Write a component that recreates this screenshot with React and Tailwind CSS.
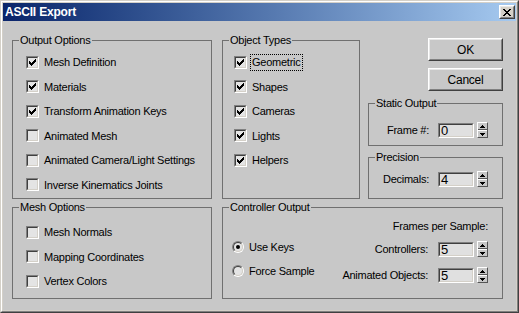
const CHECK_ROWS = [
  [[6, 1]],
  [[5, 2]],
  [[0, 1], [4, 3]],
  [[0, 2], [3, 3]],
  [[0, 5]],
  [[1, 3]],
  [[2, 1]],
]

const X_ROWS = [
  [[0, 2], [6, 2]],
  [[1, 2], [5, 2]],
  [[2, 4]],
  [[3, 2]],
  [[2, 4]],
  [[1, 2], [5, 2]],
  [[0, 2], [6, 2]],
]

function PixelGlyph({ rows, w, h }) {
  return (
    <svg width={w} height={h} viewBox={`0 0 ${w} ${h}`} shapeRendering="crispEdges">
      {rows.map((row, y) =>
        row.map(([x, len], i) => <rect key={`${y}-${i}`} x={x} y={y} width={len} height={1} fill="#000" />)
      )}
    </svg>
  )
}

function Check({ checked }) {
  return (
    <span className="block w-[13px] h-[13px] shrink-0 border border-t-[#808080] border-l-[#808080] border-r-white border-b-white">
      <span className="flex w-full h-full items-center justify-center border border-t-[#404040] border-l-[#404040] border-r-[#d4d0c8] border-b-[#d4d0c8] bg-[#e4e4e4]">
        {checked && <PixelGlyph rows={CHECK_ROWS} w={7} h={7} />}
      </span>
    </span>
  )
}

function Radio({ selected }) {
  return (
    <span className="block w-[12px] h-[12px] shrink-0 rounded-full border border-t-[#808080] border-l-[#808080] border-r-white border-b-white">
      <span className="flex w-full h-full items-center justify-center rounded-full border border-t-[#404040] border-l-[#404040] border-r-[#d4d0c8] border-b-[#d4d0c8] bg-[#e4e4e4]">
        {selected && <span className="block w-[4px] h-[4px] rounded-full bg-black" />}
      </span>
    </span>
  )
}

function Field({ value }) {
  return (
    <span className="block w-[36px] h-[15px] border border-t-[#808080] border-l-[#808080] border-r-white border-b-white">
      <span className="flex w-full h-full items-center pl-[1px] border border-t-[#404040] border-l-[#404040] border-r-[#d4d0c8] border-b-[#d4d0c8] bg-[#e0e0e0] text-[13px] leading-none">
        {value}
      </span>
    </span>
  )
}

function Arrow({ down }) {
  const rows = down ? [[[0, 5]], [[1, 3]], [[2, 1]]] : [[[2, 1]], [[1, 3]], [[0, 5]]]
  return <PixelGlyph rows={rows} w={5} h={3} />
}

function Spinner() {
  return (
    <span className="flex flex-col w-[11px] h-[16px] border border-t-white border-l-white border-r-[#555] border-b-[#555] bg-[#c8c8c8]">
      <span className="flex flex-1 items-center justify-center border-b border-b-[#555]">
        <Arrow />
      </span>
      <span className="flex flex-1 items-center justify-center border-t border-t-white">
        <Arrow down />
      </span>
    </span>
  )
}

function Button({ children }) {
  return (
    <div className="w-[75px] h-[23px] border border-t-white border-l-white border-r-[#404040] border-b-[#404040]">
      <div className="flex w-full h-full items-center justify-center border border-t-[#e8e8e8] border-l-[#e8e8e8] border-r-[#808080] border-b-[#808080] text-[12px]">
        {children}
      </div>
    </div>
  )
}

function Group({ title, className = '', children }) {
  return (
    <fieldset className={`border border-[#707070] ${className}`}>
      <legend className="ml-[6px] px-[1px] leading-[13px]">{title}</legend>
      {children}
    </fieldset>
  )
}

function CheckRow({ label, checked, focused }) {
  return (
    <div className="flex items-center h-[24.5px]">
      <Check checked={checked} />
      {focused ? (
        <span className="ml-[3px] px-[1px] leading-[15px] border border-dotted border-black">{label}</span>
      ) : (
        <span className="ml-[5px]">{label}</span>
      )}
    </div>
  )
}

function SpinRow({ label, value, gap }) {
  return (
    <div className="flex items-center h-[16px]">
      <span>{label}</span>
      <span className={gap}>
        <Field value={value} />
      </span>
      <span className="ml-[3px]">
        <Spinner />
      </span>
    </div>
  )
}

export default function App() {
  return (
    <div className="w-[519px] h-[313px] border border-t-[#d4d0c8] border-l-[#d4d0c8] border-r-[#404040] border-b-[#404040] font-['Liberation_Sans',Arial,sans-serif] text-[11px] tracking-[-0.25px] text-black">
      <div className="flex flex-col h-full p-[1px] bg-[#d4d0c8] border border-t-white border-l-white border-r-[#808080] border-b-[#808080]">
        {/* title bar */}
        <div className="flex items-center h-[18px] shrink-0 bg-linear-to-r from-[#0a246a] to-[#a6caf0]">
          <span className="ml-[2px] text-[12px] font-bold text-white tracking-[-0.2px]">ASCII Export</span>
          <div className="ml-auto mr-[1px] w-[16px] h-[14px] border border-t-white border-l-white border-r-[#404040] border-b-[#404040]">
            <div className="flex w-full h-full items-center justify-center border border-t-[#e8e8e8] border-l-[#e8e8e8] border-r-[#808080] border-b-[#808080] bg-[#d4d0c8]">
              <PixelGlyph rows={X_ROWS} w={8} h={7} />
            </div>
          </div>
        </div>

        <div className="flex-1 flex flex-col bg-[#c8c8c8] pl-[9px] pt-[13px]">
          <div className="flex items-start">
            <Group title="Output Options" className="w-[200px] h-[165px]">
              <div className="flex flex-col pl-[13px] pt-[3px]">
                <CheckRow label="Mesh Definition" checked />
                <CheckRow label="Materials" checked />
                <CheckRow label="Transform Animation Keys" checked />
                <CheckRow label="Animated Mesh" />
                <CheckRow label="Animated Camera/Light Settings" />
                <CheckRow label="Inverse Kinematics Joints" />
              </div>
            </Group>

            <Group title="Object Types" className="ml-[10px] w-[138px] h-[165px]">
              <div className="flex flex-col pl-[11px] pt-[3px]">
                <CheckRow label="Geometric" checked focused />
                <CheckRow label="Shapes" checked />
                <CheckRow label="Cameras" checked />
                <CheckRow label="Lights" checked />
                <CheckRow label="Helpers" checked />
              </div>
            </Group>

            <div className="ml-[8px] w-[135px] flex flex-col items-end">
              <div className="mt-[4px]">
                <Button>OK</Button>
              </div>
              <div className="mt-[7px]">
                <Button>Cancel</Button>
              </div>
              <Group title="Static Output" className="mt-[6px] self-stretch h-[49px]">
                <div className="flex justify-end pr-[14px] pt-[12px]">
                  <SpinRow label="Frame #:" value="0" gap="ml-[9px]" />
                </div>
              </Group>
              <Group title="Precision" className="mt-[5px] self-stretch h-[48px]">
                <div className="flex justify-end pr-[14px] pt-[7px]">
                  <SpinRow label="Decimals:" value="4" gap="ml-[9px]" />
                </div>
              </Group>
            </div>
          </div>

          <div className="flex items-start mt-[2px]">
            <Group title="Mesh Options" className="w-[200px] h-[98px]">
              <div className="flex flex-col pl-[13px] pt-[6px]">
                <CheckRow label="Mesh Normals" />
                <CheckRow label="Mapping Coordinates" />
                <CheckRow label="Vertex Colors" />
              </div>
            </Group>

            <Group title="Controller Output" className="ml-[10px] w-[281px] h-[98px]">
              <div className="flex">
                <div className="flex flex-col pl-[9px] pt-[21px]">
                  <div className="flex items-center h-6">
                    <Radio selected />
                    <span className="ml-[5px]">Use Keys</span>
                  </div>
                  <div className="flex items-center h-6">
                    <Radio />
                    <span className="ml-[5px]">Force Sample</span>
                  </div>
                </div>
                <div className="ml-auto flex flex-col items-end pr-[14px] pt-[6px]">
                  <span className="leading-[13px]">Frames per Sample:</span>
                  <div className="mt-[8px]">
                    <SpinRow label="Controllers:" value="5" gap="ml-[10px]" />
                  </div>
                  <div className="mt-[10px]">
                    <SpinRow label="Animated Objects:" value="5" gap="ml-[10px]" />
                  </div>
                </div>
              </div>
            </Group>
          </div>
        </div>
      </div>
    </div>
  )
}
